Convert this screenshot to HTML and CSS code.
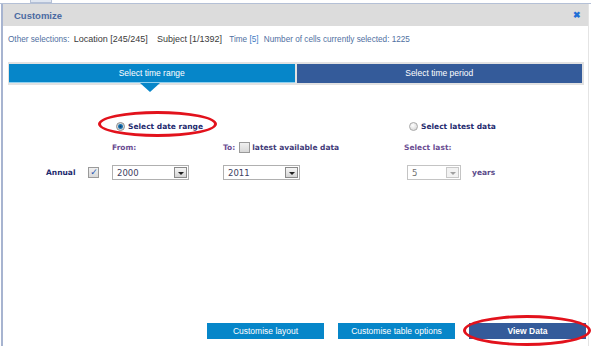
FILE: index.html
```html
<!DOCTYPE html>
<html lang="en">
<head>
    <meta charset="UTF-8">
    <title>Customize</title>
    <link rel="stylesheet" href="styles.css">
</head>
<body>

<div class="page-top"><span class="page-tab"></span></div>

<div class="dialog">
    <div class="dialog-header">
        <span class="dialog-title">Customize</span>
        <span class="close">&#10006;</span>
    </div>

    <div class="selections">
        Other selections:
        <b>Location [245/245]</b>
        <b>Subject [1/1392]</b>
        <span class="time">Time <span class="blue">[5]</span></span>
        Number of cells currently selected: 1225
    </div>

    <!-- tabs -->
    <div class="tabs">
        <div class="tab active">Select time range</div>
        <div class="tab">Select time period</div>
    </div>

    <div class="form">
        <div class="cell c2 r1">
            <span class="radio checked"></span>
            <span class="opt">Select date range</span>
            <span class="ring ring-range"></span>
        </div>
        <div class="cell c4 r1 latest">
            <span class="radio"></span>
            <span class="opt">Select latest data</span>
        </div>

        <div class="cell c2 r2 lbl">From:</div>
        <div class="cell c3 r2 lbl">To: <span class="check"></span> <span class="small">latest available data</span></div>
        <div class="cell c4 r2 lbl">Select last:</div>

        <div class="cell c1 r3 annual">Annual <span class="check on">&#10003;</span></div>
        <div class="cell c2 r3"><div class="select"><span>2000</span><span class="arrow"></span></div></div>
        <div class="cell c3 r3"><div class="select"><span>2011</span><span class="arrow"></span></div></div>
        <div class="cell c4 r3 last-row">
            <div class="select short disabled"><span>5</span><span class="arrow"></span></div>
            <span class="years">years</span>
        </div>
    </div>

    <div class="buttons">
        <button class="btn">Customise layout</button>
        <button class="btn">Customise table options</button>
        <button class="btn dark">View Data <span class="ring ring-view"></span></button>
    </div>
</div>

</body>
</html>
```

FILE: styles.css
```css
* {
    margin: 0;
    padding: 0;
    box-sizing: border-box;
}

body {
    font-family: 'Liberation Sans', Arial, sans-serif;
    width: 591px;
    height: 346px;
    overflow: hidden;
    background: #ffffff;
}

.page-top {
    height: 4px;
    border-bottom: 1px solid #b4c0d6;
    position: relative;
}

.page-tab {
    position: absolute;
    left: 30px;
    top: 0;
    width: 22px;
    height: 3px;
    background: #dfe6f1;
    border: 1px solid #b4c0d6;
    border-top: none;
}

.dialog {
    height: 342px;
    width: 588px;
    margin-left: 1px;
    border-left: 2px solid #a7b4d0;
    border-right: 1px solid #e4e4e4;
    display: flex;
    flex-direction: column;
    position: relative;
}

.dialog-header {
    height: 22px;
    background: #dcdcdc;
    display: flex;
    align-items: center;
    justify-content: space-between;
    padding: 0 7px 0 11px;
}

.dialog-title {
    font-size: 9.5px;
    font-weight: bold;
    color: #4a6aa2;
}

.close {
    color: #1f6fd6;
    font-size: 9px;
    font-weight: bold;
}

.selections {
    margin-top: 8px;
    padding-left: 5px;
    font-size: 8.2px;
    line-height: 10px;
    color: #4f6f9f;
    white-space: nowrap;
}

.selections b {
    font-weight: normal;
    color: #3a3a3a;
    font-size: 9px;
    margin-left: 2px;
    margin-right: 5px;
}

.blue {
    color: #3d7bc4;
}

.time {
    margin-right: 3px;
}

.tabs {
    margin: 17px 4px 0 5px;
    background: #e2e2e2;
    padding: 2px 2px 2px 1px;
    display: flex;
    gap: 2px;
}

.tab {
    flex: 1;
    height: 19px;
    background: #345b9a;
    color: #ffffff;
    font-size: 8.5px;
    text-align: center;
    line-height: 19px;
}

.tab.active {
    background: #0686c9;
    border-bottom: 1px solid #8fd0f0;
    position: relative;
}

.tab.active::after {
    content: '';
    position: absolute;
    left: 131px;
    top: 19px;
    border-left: 10px solid transparent;
    border-right: 10px solid transparent;
    border-top: 9px solid #0686c9;
}

.form {
    display: grid;
    grid-template-columns: 69px 111px 181px auto;
    grid-template-rows: 14px 20px 27px;
    margin-top: 34px;
    padding-left: 40px;
    font-family: 'DejaVu Sans', Verdana, sans-serif;
}

.cell {
    display: flex;
    align-items: center;
    position: relative;
}

.c1 { grid-column: 1; }
.c2 { grid-column: 2; }
.c3 { grid-column: 3; }
.c4 { grid-column: 4; }
.r1 { grid-row: 1; padding-left: 4px; }
.r2 { grid-row: 2; align-self: end; height: 12px; }
.r3 { grid-row: 3; align-self: end; height: 15px; }

.latest {
    padding-left: 5px;
}

.opt {
    font-size: 7.5px;
    font-weight: bold;
    color: #1e2a6e;
    margin-left: 3px;
}

.radio {
    width: 9px;
    height: 9px;
    border-radius: 50%;
    border: 1px solid #a8a8a8;
    background: radial-gradient(circle at 40% 35%, #ffffff, #cfcfcf);
}

.radio.checked {
    background: radial-gradient(circle, #0b3a6a 0, #1d79b8 2px, #d6d6d6 3px, #f4f4f4 4px);
    border-color: #8a8a8a;
}

.ring {
    position: absolute;
    border: 3px solid #e2121c;
    border-radius: 50%;
}

.ring-range {
    left: -14px;
    top: -8px;
    width: 119px;
    height: 26px;
}

.lbl {
    font-size: 7.5px;
    font-weight: bold;
    color: #6a4c92;
}

.lbl .small {
    color: #3f3a78;
}

.check {
    display: inline-block;
    width: 11px;
    height: 11px;
    border: 1px solid #9a9a9a;
    background: linear-gradient(#f0f0f0, #d8d8d8);
    margin: 0 2px 0 4px;
    font-size: 9px;
    line-height: 9px;
    text-align: center;
    color: #2a56b0;
}

.annual {
    padding-left: 3px;
    font-size: 7.5px;
    font-weight: bold;
    color: #1e2a6e;
}

.annual .check {
    margin-left: 13px;
}

.select {
    width: 77px;
    height: 15px;
    border: 1px solid #b0b0b0;
    background: #ffffff;
    display: flex;
    align-items: center;
    justify-content: space-between;
    padding: 0 1px 0 4px;
    font-size: 8.5px;
    color: #404060;
}

.select.short {
    width: 54px;
    margin-left: 3px;
}

.arrow {
    width: 13px;
    height: 11px;
    border: 1px solid #8a8a8a;
    background: linear-gradient(#f6f6f6, #d4d4d4);
    position: relative;
}

.arrow::after {
    content: '';
    position: absolute;
    left: 3px;
    top: 4px;
    border-left: 3px solid transparent;
    border-right: 3px solid transparent;
    border-top: 3px solid #202020;
}

.select.disabled {
    color: #707070;
    border-color: #c4c4c4;
}

.select.disabled .arrow {
    border-color: #c8c8c8;
    background: #f2f2f2;
}

.select.disabled .arrow::after {
    border-top-color: #a0a0a0;
}

.years {
    font-size: 7.5px;
    font-weight: bold;
    color: #5a4a8a;
    margin-left: 11px;
}

.buttons {
    margin-top: auto;
    margin-bottom: 7px;
    display: flex;
    justify-content: flex-end;
    gap: 14px;
    padding-right: 2px;
}

.btn {
    width: 117px;
    height: 16px;
    border: none;
    background: #0686c9;
    color: #ffffff;
    font-family: 'Liberation Sans', Arial, sans-serif;
    font-size: 8.5px;
    position: relative;
}

.btn.dark {
    background: #345b9a;
    font-weight: bold;
}

.ring-view {
    left: -6px;
    top: -8px;
    width: 128px;
    height: 31px;
}
```
